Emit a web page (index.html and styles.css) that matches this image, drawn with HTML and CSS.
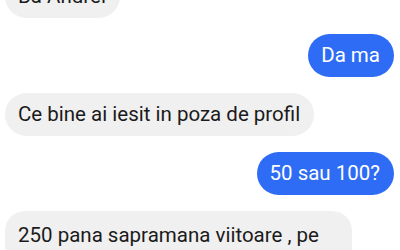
FILE: index.html
```html
<!DOCTYPE html>
<html lang="ro">

<head>
    <meta charset="UTF-8">
    <title>Chat</title>
    <link rel="stylesheet" href="styles.css">
</head>

<body>
    <div class="chat">
        <div class="msg in">Ba Andrei</div>
        <div class="msg out">Da ma</div>
        <div class="msg in">Ce bine ai iesit in poza de profil</div>
        <div class="msg out">50 sau 100?</div>
        <div class="msg in long">250 pana sapramana viitoare , pe partile bucurestiului</div>
    </div>
</body>

</html>
```
FILE: styles.css
```css
* {
    margin: 0;
    padding: 0;
    box-sizing: border-box;
}

body {
    background: #ffffff;
    font-family: Roboto, "Liberation Sans", sans-serif;
    overflow: hidden;
}

.chat {
    display: flex;
    flex-direction: column;
    gap: 16px;
    margin-top: -25px;
    padding: 0 6px 0 5px;
}

.msg {
    font-size: 20.5px;
    line-height: 24px;
    padding: 9px 14px 10px 13px;
    border-radius: 22px;
    max-width: 347px;
}

.in {
    align-self: flex-start;
    background: #f0f0f0;
    color: #1b1b1b;
}

.out {
    align-self: flex-end;
    background: #2e6cf5;
    color: #ffffff;
}

.long {
    border-radius: 20px;
    padding-top: 12px;
}
```
